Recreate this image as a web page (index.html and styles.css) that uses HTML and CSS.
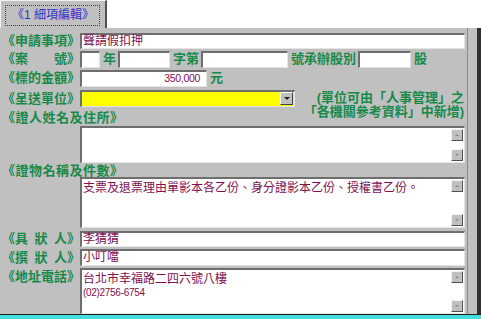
FILE: index.html
```html
<!DOCTYPE html>
<html lang="zh-Hant">
<head>
<meta charset="utf-8"/>
<meta content="width=device-width, initial-scale=1.0" name="viewport"/>
<title>細項編輯</title>
<link rel="stylesheet" href="styles.css">
</head>
<body>
<div class="tabs">
  <div class="tab"><span class="tab-focus">《1 細項編輯》</span></div>
</div>
<div class="window-body">
  <div class="sheet">
    <div class="row r1">
      <span class="label">《申請事項》</span>
      <div class="field wide">聲請假扣押</div>
    </div>
    <div class="row r2">
      <span class="label">《案　　號》</span>
      <div class="field w-year"></div>
      <span class="unit">年</span>
      <div class="field w-word"></div>
      <span class="unit">字第</span>
      <div class="field w-no"></div>
      <span class="unit">號承辦股別</span>
      <div class="field w-sec"></div>
      <span class="unit">股</span>
    </div>
    <div class="row r3">
      <span class="label">《標的金額》</span>
      <div class="field w-amount num">350,000</div>
      <span class="unit">元</span>
    </div>
    <div class="row r4">
      <span class="label">《呈送單位》</span>
      <div class="select"><span class="drop-btn"></span></div>
      <div class="note">(單位可由「人事管理」之<br>「各機關參考資料」中新增)</div>
    </div>
    <div class="label heading h-witness">《證人姓名及住所》</div>
    <div class="memo m-witness">
      <div class="memo-text"></div>
      <div class="memo-bar"><span class="sb up"></span><span class="sb down"></span></div>
    </div>
    <div class="label heading h-evidence">《證物名稱及件數》</div>
    <div class="memo m-evidence">
      <div class="memo-text">支票及退票理由單影本各乙份、身分證影本乙份、授權書乙份。</div>
      <div class="memo-bar"><span class="sb up"></span><span class="sb down"></span></div>
    </div>
    <div class="row r7">
      <span class="label">《具&ensp;狀&ensp;人》</span>
      <div class="field wide">李猜猜</div>
    </div>
    <div class="row r8">
      <span class="label">《撰&ensp;狀&ensp;人》</span>
      <div class="field wide">小叮噹</div>
    </div>
    <div class="row r9">
      <span class="label">《地址電話》</span>
      <div class="memo m-address">
        <div class="memo-text">台北市幸福路二四六號八樓<br><span class="phone">(02)2756-6754</span></div>
        <div class="memo-bar"><span class="sb up"></span><span class="sb down"></span></div>
      </div>
    </div>
  </div>
  <div class="frame-edge"></div>
  <div class="frame-dark"></div>
</div>
<div class="statusbar"></div>
</body>
</html>
```

FILE: styles.css
```css
  :root {
    --face: #c0c0c0;
    --green: #178a4a;
    --ink: #801050;
    --sunk-dark: #6e6e6e;
    --sunk-light: #e4e4e4;
  }
  * {
    box-sizing: border-box;
  }
  html, body {
    margin: 0;
  }
  body {
    width: 481px;
    height: 319px;
    overflow: hidden;
    background: #fff;
    font-family: "Liberation Sans", "Noto Sans CJK TC", sans-serif;
    font-size: 12px;
    display: flex;
    flex-direction: column;
  }
  .tabs {
    height: 28px;
    display: flex;
    background: #fff;
  }
  .tab {
    width: 107px;
    background: var(--face);
    border-top: 1px solid #f4f4f4;
    border-left: 1px solid #f4f4f4;
    border-right: 2px solid #505050;
    padding: 4px 0 0 4px;
  }
  .tab-focus {
    display: block;
    width: 95px;
    height: 21px;
    border: 1px dotted #404040;
    color: #3333cc;
    font-size: 12px;
    line-height: 19px;
    padding-left: 6px;
    white-space: nowrap;
  }
  .window-body {
    height: 286px;
    display: flex;
  }
  .sheet {
    width: 468px;
    background: var(--face);
    border-right: 1px solid #8a8a8a;
    padding-top: 5px;
    display: flex;
    flex-direction: column;
  }
  .frame-edge {
    width: 9px;
    background: var(--face);
  }
  .frame-dark {
    width: 4px;
    background: #303030;
  }
  .statusbar {
    height: 5px;
    background: #44dddd;
    border-top: 1px solid #202020;
  }
  .row {
    display: flex;
    align-items: center;
  }
  .label {
    width: 80px;
    flex: none;
    padding-left: 2px;
    color: var(--green);
    font-weight: bold;
    font-size: 13px;
    line-height: 14px;
    white-space: nowrap;
  }
  .unit {
    color: var(--green);
    font-weight: bold;
    font-size: 13px;
    line-height: 14px;
    margin: 0 2px 0 3px;
    white-space: nowrap;
  }
  .field {
    height: 100%;
    background: #fff;
    border-style: solid;
    border-width: 2px 1px 1px 2px;
    border-color: var(--sunk-dark) var(--sunk-light) var(--sunk-light) var(--sunk-dark);
    color: var(--ink);
    font-size: 12px;
    line-height: 13px;
    padding-left: 1px;
    white-space: nowrap;
  }
  .wide {
    width: 385px;
  }
  .r1 { height: 16px; }
  .r2 { height: 17px; margin-top: 2px; }
  .r3 { height: 17px; margin-top: 2px; }
  .r4 { height: 17px; margin-top: 3px; align-items: flex-start; }
  .r7 { height: 16px; margin-top: 3px; }
  .r8 { height: 17px; margin-top: 2px; }
  .r9 { height: 46px; margin-top: 2px; align-items: flex-start; }
  .r4 .label, .r9 .label {
    margin-top: 2px;
  }
  .w-year { width: 20px; }
  .w-word { width: 52px; }
  .w-no { width: 87px; }
  .w-sec { width: 53px; }
  .w-amount { width: 127px; }
  .num {
    text-align: right;
    padding-right: 6px;
    font-size: 10.5px;
    letter-spacing: -0.3px;
  }
  .select {
    width: 215px;
    height: 17px;
    flex: none;
    background: #ffff00;
    border-style: solid;
    border-width: 2px 1px 1px 2px;
    border-color: var(--sunk-dark) var(--sunk-light) var(--sunk-light) var(--sunk-dark);
    display: flex;
    justify-content: flex-end;
    align-items: center;
    padding-right: 1px;
  }
  .drop-btn {
    width: 13px;
    height: 13px;
    background: var(--face);
    border: 1px solid;
    border-color: #fff #404040 #404040 #fff;
    display: flex;
    align-items: center;
    justify-content: center;
  }
  .drop-btn::before {
    content: "";
    border: 3px solid transparent;
    border-top-color: #202020;
    border-bottom: 0;
  }
  .note {
    margin: 1px 0 0 4px;
    width: 165px;
    color: var(--green);
    font-weight: bold;
    font-size: 13px;
    line-height: 14px;
    text-align: right;
    white-space: nowrap;
  }
  .heading {
    width: auto;
    letter-spacing: 0.5px;
    line-height: 12px;
  }
  .h-witness { margin-top: 5px; }
  .h-evidence { margin-top: 2px; }
  .memo {
    margin-left: 80px;
    width: 385px;
    background: #fff;
    border-style: solid;
    border-width: 2px 1px 1px 2px;
    border-color: var(--sunk-dark) var(--sunk-light) var(--sunk-light) var(--sunk-dark);
    display: flex;
  }
  .m-witness { height: 38px; margin-top: 2px; }
  .m-evidence { height: 51px; }
  .m-address { height: 46px; margin-left: 0; }
  .memo-text {
    flex: 1;
    padding: 3px 0 0 1px;
    color: var(--ink);
    font-size: 12px;
    line-height: 13px;
    white-space: nowrap;
  }
  .phone {
    font-size: 10px;
    letter-spacing: -0.3px;
    line-height: 12px;
  }
  .memo-bar {
    width: 13px;
    padding: 1px 1px 1px 0;
    display: flex;
    flex-direction: column;
    justify-content: space-between;
  }
  .sb {
    width: 12px;
    height: 12px;
    background: var(--face);
    border: 1px solid;
    border-color: #f4f4f4 #505050 #505050 #f4f4f4;
    display: flex;
    align-items: center;
    justify-content: center;
  }
  .sb::before {
    content: "";
    border: 2px solid transparent;
  }
  .sb.up::before {
    border-bottom-color: #8a8a8a;
    border-top: 0;
  }
  .sb.down::before {
    border-top-color: #8a8a8a;
    border-bottom: 0;
  }
```
